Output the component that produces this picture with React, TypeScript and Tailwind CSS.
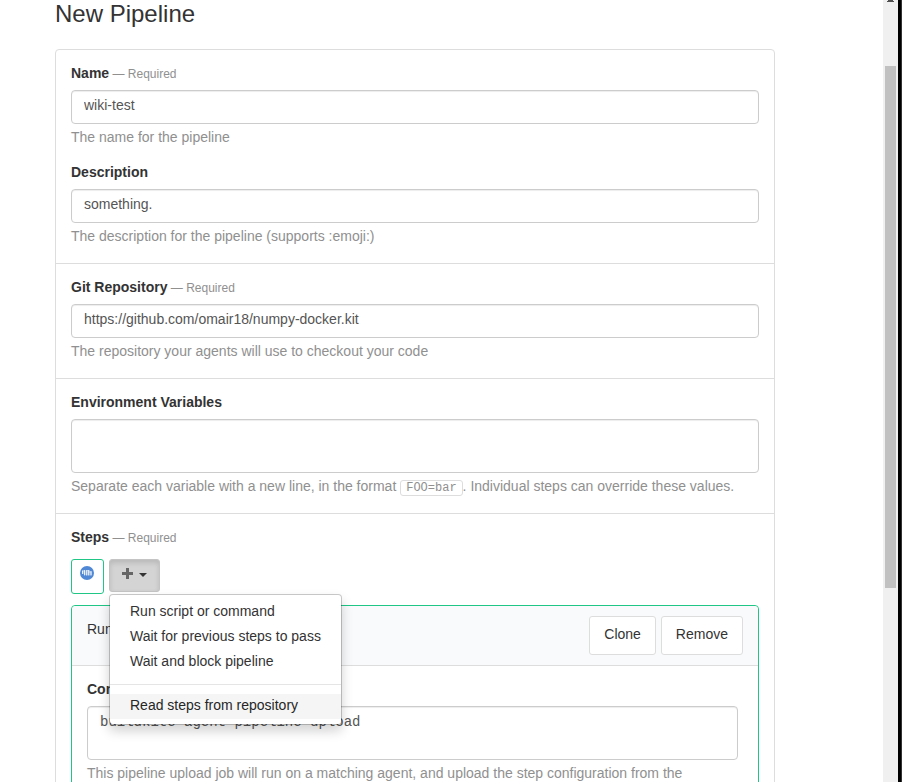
import type { ReactNode } from "react";

const controlClass =
  "block w-full resize-none rounded border border-[#ccc] bg-white px-3 text-sm leading-5 text-[#555] shadow-[inset_0_1px_1px_rgba(0,0,0,0.075)] outline-none";

const stepOptions = [
  "Run script or command",
  "Wait for previous steps to pass",
  "Wait and block pipeline",
];

function Label({ id, required, children }: { id: string; required?: boolean; children: ReactNode }) {
  return (
    <label id={`${id}-label`} htmlFor={id} className="block text-sm leading-5 font-bold">
      {children}
      {required && <span className="text-xs font-normal text-[#909090]"> — Required</span>}
    </label>
  );
}

function Field({ id, label, required, help, children }: {
  id: string;
  label: string;
  required?: boolean;
  help: ReactNode;
  children: ReactNode;
}) {
  return (
    <div className="flex flex-col">
      <Label id={id} required={required}>{label}</Label>
      <div className="mt-[7px]">{children}</div>
      <p className="mt-[3px] text-sm leading-5 text-[#909090]">{help}</p>
    </div>
  );
}

function Section({ children }: { children: ReactNode }) {
  return (
    <section className="flex flex-col gap-[15px] border-b border-[#ddd] px-[15px] pt-[13px] pb-[17px]">
      {children}
    </section>
  );
}

function AgentIcon() {
  return (
    <svg viewBox="0 0 14 14" className="size-[14px]" aria-hidden="true">
      <circle cx="7" cy="7" r="7" fill="#5088d6" />
      <g fill="none" stroke="#fff" strokeLinecap="round" strokeWidth="1.2">
        <path d="M2.7 5v2.4M4.7 4.6v4.2M6.8 4.6v4.4M8.8 4.6v4.4M11 5.6v3.4" />
        <path d="M2.7 4.8h2M6.8 4.6h2M8.8 6h2" strokeWidth="0.8" opacity="0.6" />
      </g>
    </svg>
  );
}

function StepMenu() {
  return (
    <div className="relative">
      <button
        type="button"
        aria-label="Add step"
        aria-expanded="true"
        className="flex h-[33px] w-[51px] items-center justify-center gap-[6px] rounded-[3px] border border-[#c4c4c4] bg-[#d4d4d4] pb-1 shadow-[inset_0_3px_5px_rgba(0,0,0,0.125)]"
      >
        <svg viewBox="0 0 11 11" className="size-[11px]" aria-hidden="true">
          <path d="M4 0h3v4h4v3H7v4H4V7H0V4h4z" fill="#666" />
        </svg>
        <svg viewBox="0 0 8 4" className="mt-[2px] h-1 w-2" aria-hidden="true">
          <path d="M0 0h8L4 4z" fill="#333" />
        </svg>
      </button>
      <div
        role="menu"
        className="absolute top-[35px] left-0 z-10 w-[233px] rounded border border-black/20 bg-white bg-clip-padding py-[5px] shadow-[0_6px_12px_rgba(0,0,0,0.175)]"
      >
        {stepOptions.map((option) => (
          <button
            key={option}
            type="button"
            role="menuitem"
            className="block w-full px-5 pt-px pb-1 text-left text-sm leading-5 whitespace-nowrap"
          >
            {option}
          </button>
        ))}
        <hr className="my-[9px] border-[#e5e5e5]" />
        <button
          type="button"
          role="menuitem"
          className="block w-full bg-[#f5f5f5] px-5 pt-px pb-1 text-left text-sm leading-5 whitespace-nowrap text-[#262626]"
        >
          Read steps from repository
        </button>
      </div>
    </div>
  );
}

function StepCard() {
  const buttonClass =
    "h-[39px] rounded-[3px] border border-[#ddd] bg-white px-[14px] pb-1 text-sm leading-5";
  return (
    <div className="mt-[11px] rounded border border-[#1fc686]">
      <div className="flex items-start justify-between rounded-t border-b border-[#ddd] bg-[#f9fafc] px-[15px] py-[10px]">
        <h2 className="pt-[3px] text-sm leading-5">Run script or command</h2>
        <div className="flex gap-[5px]">
          <button type="button" className={buttonClass}>Clone</button>
          <button type="button" className={buttonClass}>Remove</button>
        </div>
      </div>
      <div className="pt-[13px] pr-5 pb-[17px] pl-[15px]">
        <Field
          id="command"
          label="Commands to run"
          help="This pipeline upload job will run on a matching agent, and upload the step configuration from the repository."
        >
          <textarea
            id="command"
            defaultValue="buildkite-agent pipeline upload"
            className={`${controlClass} h-[54px] pt-[5px] font-['Liberation_Mono',monospace]`}
          />
        </Field>
      </div>
    </div>
  );
}

function Scrollbar() {
  return (
    <div className="flex shrink-0" aria-hidden="true">
      <div className="flex w-[15px] flex-col items-center bg-[#f0f0f0]">
        <svg viewBox="0 0 7 2" className="h-[2px] w-[7px]">
          <path d="M1 0h5v1h1v1H0V1h1z" fill="#505050" />
        </svg>
        <div className="mt-16 h-[522px] w-[11px] bg-[#c1c1c1]" />
      </div>
      <div className="w-[3px] bg-black" />
      <div className="w-px bg-[#333]" />
    </div>
  );
}

export default function App() {
  return (
    <div className="flex h-screen overflow-hidden bg-white font-['Liberation_Sans',Arial,sans-serif] text-[#333]">
      <main className="mr-[108px] ml-[55px] min-w-0 flex-1">
        <h1 className="mb-[21px] text-2xl leading-7">New Pipeline</h1>
        <form className="rounded border border-[#ddd]">
          <Section>
            <Field id="name" label="Name" required help="The name for the pipeline">
              <input id="name" type="text" defaultValue="wiki-test" className={`${controlClass} h-[34px] pt-1 pb-2`} />
            </Field>
            <Field id="description" label="Description" help="The description for the pipeline (supports :emoji:)">
              <input id="description" type="text" defaultValue="something." className={`${controlClass} h-[34px] pt-1 pb-2`} />
            </Field>
          </Section>
          <Section>
            <Field
              id="repository"
              label="Git Repository"
              required
              help="The repository your agents will use to checkout your code"
            >
              <input
                id="repository"
                type="text"
                defaultValue="https://github.com/omair18/numpy-docker.kit"
                className={`${controlClass} h-[34px] pt-1 pb-2`}
              />
            </Field>
          </Section>
          <Section>
            <Field
              id="environment"
              label="Environment Variables"
              help={
                <>
                  Separate each variable with a new line, in the format{" "}
                  <code className="rounded-[3px] border border-[#ddd] px-[5px] font-['Liberation_Mono',monospace] text-xs leading-3">
                    FOO=bar
                  </code>
                  . Individual steps can override these values.
                </>
              }
            >
              <textarea id="environment" className={`${controlClass} h-[54px] pt-[5px]`} />
            </Field>
          </Section>
          <div className="px-[15px] pt-[13px] pb-[17px]">
            <Label id="add-command" required>Steps</Label>
            <div className="mt-3 flex items-start gap-[5px]">
              <button
                id="add-command"
                type="button"
                className="flex h-[35px] w-[33px] items-center rounded-[3px] border border-[#1fc686] bg-white pb-[7px] pl-2"
              >
                <AgentIcon />
              </button>
              <StepMenu />
            </div>
            <StepCard />
          </div>
        </form>
      </main>
      <Scrollbar />
    </div>
  );
}
